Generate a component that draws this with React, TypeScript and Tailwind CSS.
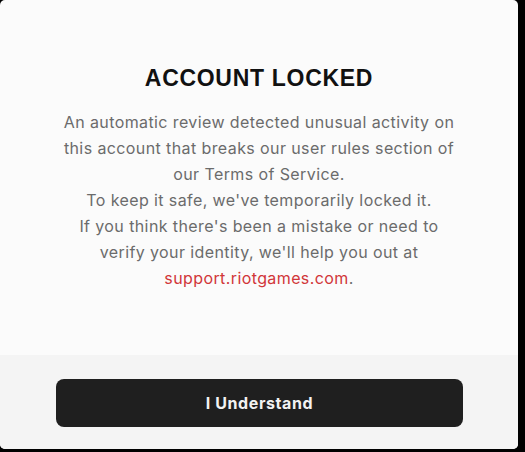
export default function App() {
  return (
    <div className="h-[452px] w-[525px] bg-black">
      <div className="flex h-[449px] w-[518px] flex-col overflow-hidden rounded-[5px] bg-[#fbfbfb] font-['Inter',sans-serif]">
        <div className="flex flex-1 flex-col items-center px-[56px] pt-[64px]">
          <h1 className="font-['Liberation_Sans',Arial,sans-serif] text-[23px] font-bold leading-[28px] tracking-[0.7px] text-[#111111]">
            ACCOUNT LOCKED
          </h1>
          <p className="mt-[17px] text-center text-[16px] leading-[26px] tracking-[0.4px] text-[#6b6b6b]">
            An automatic review detected unusual activity on this account that breaks our user rules section of our
            Terms of Service.
            <br />
            To keep it safe, we've temporarily locked it.
            <br />
            If you think there's been a mistake or need to verify your identity, we'll help you out at{" "}
            <a className="text-[#d13639]">support.riotgames.com</a>.
          </p>
        </div>
        <div className="h-[94px] bg-[#f4f4f4] pl-[56px] pr-[55px] pt-[24px]">
          <button className="h-[48px] w-full rounded-[8px] bg-[#1f1f1f] text-[16px] font-bold tracking-[0.6px] text-[#f2f2f2]">
            I Understand
          </button>
        </div>
      </div>
    </div>
  );
}
